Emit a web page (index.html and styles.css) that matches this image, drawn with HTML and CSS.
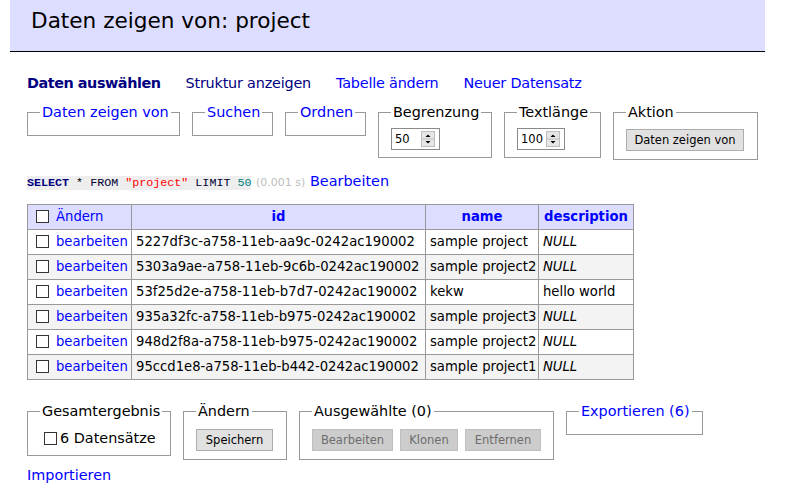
FILE: index.html
```html
<!DOCTYPE html>
<html lang="de">
<head>
<meta charset="utf-8">
<title>Daten zeigen von: project</title>
<link rel="stylesheet" href="styles.css">
</head>
<body>
<div class="content">
  <h2 class="page-title">Daten zeigen von: project</h2>
  <p class="links">
    <a class="current" href="#">Daten auswählen</a>
    <a class="visited" href="#">Struktur anzeigen</a>
    <a href="#">Tabelle ändern</a>
    <a href="#">Neuer Datensatz</a>
  </p>
  <form class="filters">
    <fieldset class="fs w-show"><legend><a href="#">Daten zeigen von</a></legend></fieldset>
    <fieldset class="fs w-search"><legend><a href="#">Suchen</a></legend></fieldset>
    <fieldset class="fs w-order"><legend><a href="#">Ordnen</a></legend></fieldset>
    <fieldset class="fs w-limit"><legend>Begrenzung</legend>
      <span class="num w-num50"><input class="num-input" type="text" value="50"><svg class="spin" width="14" height="16" viewBox="0 0 14 16"><rect x="0.5" y="0.5" width="13" height="15" fill="#e6e6e6" stroke="#bdbdbd"/><line x1="1" y1="8" x2="13" y2="8" stroke="#bdbdbd"/><path d="M4.5 6L7 3.5L9.5 6Z" fill="#000"/><path d="M4.5 10L7 12.5L9.5 10Z" fill="#000"/></svg></span>
    </fieldset>
    <fieldset class="fs w-textlen"><legend>Textlänge</legend>
      <span class="num w-num100"><input class="num-input" type="text" value="100"><svg class="spin" width="14" height="16" viewBox="0 0 14 16"><rect x="0.5" y="0.5" width="13" height="15" fill="#e6e6e6" stroke="#bdbdbd"/><line x1="1" y1="8" x2="13" y2="8" stroke="#bdbdbd"/><path d="M4.5 6L7 3.5L9.5 6Z" fill="#000"/><path d="M4.5 10L7 12.5L9.5 10Z" fill="#000"/></svg></span>
    </fieldset>
    <fieldset class="fs w-action"><legend>Aktion</legend>
      <button type="button" class="btn btn-show">Daten zeigen von</button>
    </fieldset>
  </form>
  <p class="query"><code class="sql"><b class="kw-main">SELECT</b> * <span class="kw">FROM</span> <span class="str">"project"</span> <span class="kw">LIMIT</span> <span class="num-lit">50</span></code> <span class="time">(0.001 s)</span> <a href="#">Bearbeiten</a></p>
  <table class="data">
    <colgroup><col class="c-edit"><col class="c-id"><col class="c-name"><col class="c-desc"></colgroup>
    <thead>
      <tr><td class="head-edit"><input type="checkbox" class="cb"><a href="#">Ändern</a></td><th><a href="#">id</a></th><th><a href="#">name</a></th><th><a href="#">description</a></th></tr>
    </thead>
    <tbody>
      <tr><td><input type="checkbox" class="cb"><a href="#">bearbeiten</a></td><td>5227df3c-a758-11eb-aa9c-0242ac190002</td><td>sample project</td><td><i>NULL</i></td></tr>
      <tr><td><input type="checkbox" class="cb"><a href="#">bearbeiten</a></td><td>5303a9ae-a758-11eb-9c6b-0242ac190002</td><td>sample project2</td><td><i>NULL</i></td></tr>
      <tr><td><input type="checkbox" class="cb"><a href="#">bearbeiten</a></td><td>53f25d2e-a758-11eb-b7d7-0242ac190002</td><td>kekw</td><td>hello world</td></tr>
      <tr><td><input type="checkbox" class="cb"><a href="#">bearbeiten</a></td><td>935a32fc-a758-11eb-b975-0242ac190002</td><td>sample project3</td><td><i>NULL</i></td></tr>
      <tr><td><input type="checkbox" class="cb"><a href="#">bearbeiten</a></td><td>948d2f8a-a758-11eb-b975-0242ac190002</td><td>sample project2</td><td><i>NULL</i></td></tr>
      <tr><td><input type="checkbox" class="cb"><a href="#">bearbeiten</a></td><td>95ccd1e8-a758-11eb-b442-0242ac190002</td><td>sample project1</td><td><i>NULL</i></td></tr>
    </tbody>
  </table>
  <form class="actions">
    <fieldset class="fs w-total"><legend>Gesamtergebnis</legend>
      <label class="total"><input type="checkbox" class="cb cb-total">6 Datensätze</label>
    </fieldset>
    <fieldset class="fs w-modify"><legend>Ändern</legend>
      <button type="button" class="btn btn-save">Speichern</button>
    </fieldset>
    <fieldset class="fs w-selected"><legend>Ausgewählte (0)</legend>
      <div class="btn-row">
        <button type="button" class="btn btn-disabled btn-edit" disabled>Bearbeiten</button>
        <button type="button" class="btn btn-disabled btn-clone" disabled>Klonen</button>
        <button type="button" class="btn btn-disabled btn-del" disabled>Entfernen</button>
      </div>
    </fieldset>
    <fieldset class="fs w-export"><legend><a href="#">Exportieren (6)</a></legend></fieldset>
  </form>
  <p class="import"><a href="#">Importieren</a></p>
</div>
</body>
</html>
```

FILE: styles.css
```css
* { box-sizing: border-box; }
html, body { margin: 0; background: #fff; }
body {
  font: 14.4px/18px "DejaVu Sans", Verdana, sans-serif;
  color: #000;
}
a { color: #00f; text-decoration: none; }

.content { width: 765px; padding-left: 27px; }

.page-title {
  margin: 0 0 0 -17px;
  padding: 7px 21px 17px;
  font-size: 21.6px;
  line-height: 27px;
  font-weight: normal;
  background: #ddf;
  border-bottom: 1px solid #000;
}

.links { display: flex; gap: 25px; margin: 22px 0 0; white-space: nowrap; }
.links a { letter-spacing: -0.2px; }
.links .current { color: #000080; font-weight: bold; letter-spacing: -0.45px; }
.links .visited { color: #000080; }

.filters, .actions { display: flex; align-items: flex-start; gap: 12px; margin: 11px 0 0; }
.actions { margin-top: 22px; }

.fs {
  margin: 0;
  min-width: 0;
  padding: 7px 12px 7px;
  border: 1px solid #999;
}
.fs legend { padding: 0 2px; line-height: 18px; white-space: nowrap; }

.w-show { width: 153px; }
.w-search { width: 81px; }
.w-order { width: 81px; }
.w-limit { width: 114px; }
.w-textlen { width: 97px; }
.w-action { width: 145px; }
.w-total { width: 144px; }
.w-modify { width: 104px; }
.w-selected { width: 255px; }
.w-export { width: 137px; }

.num {
  display: flex;
  align-items: center;
  height: 22px;
  border: 1px solid #8a8a8a;
  background: #fff;
}
.w-num50 { width: 49px; }
.w-num100 { width: 48px; }
.num-input {
  flex: 1;
  min-width: 0;
  border: 0;
  padding: 0 0 0 3px;
  margin: 0;
  font: 11.5px "DejaVu Sans", Verdana, sans-serif;
  color: #000;
  background: transparent;
  outline: none;
}
.spin { flex: none; margin-right: 4px; display: block; }

.btn {
  -webkit-appearance: none;
  appearance: none;
  height: 22px;
  margin: 1px 0;
  padding: 0;
  border: 1px solid #adadad;
  background: #e1e1e1;
  color: #000;
  font: 11.5px "DejaVu Sans", Verdana, sans-serif;
  text-align: center;
}
.btn-show { width: 118px; }
.btn-save { width: 77px; margin: 2px 0 1px; }
.btn-disabled { background: #cccccc; border-color: #bfbfbf; color: #6d6d6d; }
.btn-row { display: flex; gap: 7px; margin: 2px 0 1px; }
.btn-row .btn { margin: 0; }
.btn-edit { width: 81px; }
.btn-clone { width: 58px; }
.btn-del { width: 76px; }

.query { margin: 12px 0 0; height: 18px; white-space: nowrap; }
.sql {
  font: 11.7px/1 "Liberation Mono", "Courier New", monospace;
  background: #eee;
  color: #000;
}
.sql .kw-main { color: #000080; font-weight: bold; }
.sql .kw { color: #000033; }
.sql .str { color: #f00; }
.sql .num-lit { color: #007f7f; }
.time { color: #bdbdbd; font-size: 11px; line-height: 1; }

.data {
  margin: 14px 0 0;
  border-collapse: collapse;
  table-layout: fixed;
  width: 607px;
  font-size: 13.2px;
  line-height: 16px;
}
.c-edit { width: 104px; }
.c-id { width: 294px; }
.c-name { width: 113px; }
.c-desc { width: 95px; }
.data tr { height: 25px; }
.data td, .data th {
  border: 1px solid #999;
  padding: 0 4px;
  vertical-align: middle;
  white-space: nowrap;
  overflow: hidden;
}
.data thead td, .data thead th { background: #ddf; }
.data th { text-align: center; font-weight: bold; }
.data tbody tr:nth-child(2n) { background: #f3f3f3; }
.data i { font-style: italic; }

.cb {
  -webkit-appearance: none;
  appearance: none;
  width: 13px;
  height: 13px;
  margin: 0 7px 0 4px;
  border: 1px solid #333;
  background: #fff;
  vertical-align: middle;
  position: relative;
  top: -1px;
}
.total { display: flex; align-items: center; height: 21px; white-space: nowrap; }
.cb-total { margin: 2px 3px 0 4px; top: 0; }

.import { margin: 6px 0 0; }
```
